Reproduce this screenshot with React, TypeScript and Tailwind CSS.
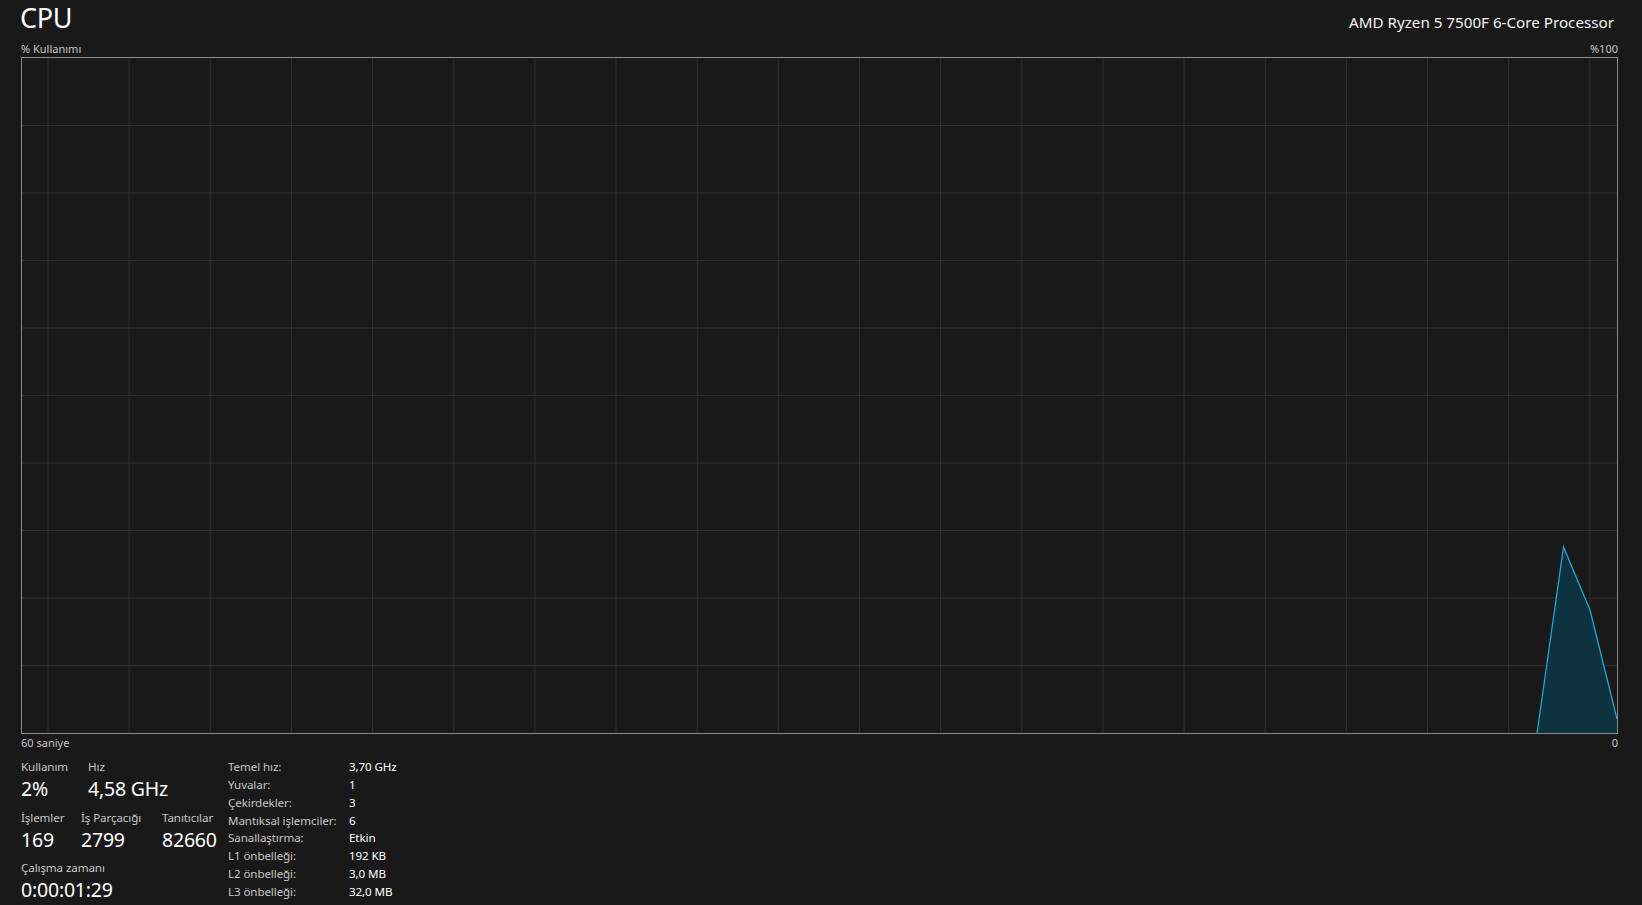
import React from "react";

// grafik iç alanı (kenarlık hariç)
const W = 1596;
const H = 675;

const vLines = Array.from({ length: 20 }, (_, i) => 26 + i * 81.2).filter((x) => x < W);
const hLines = Array.from({ length: 9 }, (_, i) => 67.5 * (i + 1));

const usage = [
  [1516, 675],
  [1542.5, 489],
  [1569, 552],
  [1596, 661],
];

const specs: [string, string][] = [
  ["Temel hız:", "3,70 GHz"],
  ["Yuvalar:", "1"],
  ["Çekirdekler:", "3"],
  ["Mantıksal işlemciler:", "6"],
  ["Sanallaştırma:", "Etkin"],
  ["L1 önbelleği:", "192 KB"],
  ["L2 önbelleği:", "3,0 MB"],
  ["L3 önbelleği:", "32,0 MB"],
];

function Stat({ label, value, className }: { label: string; value: string; className?: string }) {
  return (
    <div className={className}>
      <div className="text-[11.6px] leading-[16px] tracking-[-0.1px] text-[#c6c6c6]">{label}</div>
      <div className="mt-[2px] text-[19.5px] leading-[24px] tracking-[-0.2px] text-white">{value}</div>
    </div>
  );
}

function UsageGraph() {
  const line = usage.map((p) => p.join(",")).join(" ");
  const area = `${line} ${W},${H}`;
  return (
    <div className="h-[677px] w-full border border-[#8b8b8b]">
      <svg width="100%" height="100%" viewBox={`0 0 ${W} ${H}`} preserveAspectRatio="none" className="block">
        {vLines.map((x) => (
          <line key={x} x1={x} x2={x} y1={0} y2={H} stroke="#2e2e2e" strokeWidth={1} />
        ))}
        {hLines.map((y) => (
          <line key={y} x1={0} x2={W} y1={y} y2={y} stroke="#2e2e2e" strokeWidth={1} />
        ))}
        <polygon points={area} fill="#0f333e" />
        <polyline points={line} fill="none" stroke="#21a6d6" strokeWidth={1.3} />
      </svg>
    </div>
  );
}

export default function App() {
  return (
    <div
      className="h-[905px] w-full overflow-hidden bg-[#191919] pl-[21px] pr-[24px] text-white"
      style={{ fontFamily: '"Noto Sans", "Open Sans", sans-serif' }}
    >
      {/* başlık */}
      <div className="flex h-[40px] items-baseline justify-between">
        <div className="text-[27px] leading-[36px] tracking-[-0.3px] -ml-[1px]">CPU</div>
        <div className="text-[15.2px] leading-[36px] text-[#f2f2f2] pr-[4px]">AMD Ryzen 5 7500F 6-Core Processor</div>
      </div>

      <div className="flex h-[17px] justify-between text-[11px] leading-[17px] text-[#c6c6c6]">
        <span>% Kullanımı</span>
        <span>%100</span>
      </div>

      <UsageGraph />

      <div className="flex h-[18px] justify-between text-[11px] leading-[18px] text-[#c6c6c6]">
        <span>60 saniye</span>
        <span>0</span>
      </div>

      {/* alt bilgiler */}
      <div className="flex">
        <div className="mt-[7px] flex w-[207px] flex-col gap-[8.5px]">
          <div className="flex">
            <Stat label="Kullanım" value="2%" className="w-[67px]" />
            <Stat label="Hız" value="4,58 GHz" />
          </div>
          <div className="flex">
            <Stat label="İşlemler" value="169" className="w-[60px]" />
            <Stat label="İş Parçacığı" value="2799" className="w-[81px]" />
            <Stat label="Tanıtıcılar" value="82660" />
          </div>
          <Stat label="Çalışma zamanı" value="0:00:01:29" />
        </div>

        <div className="mt-[6px]">
          {specs.map(([k, v]) => (
            <div key={k} className="flex text-[11.6px] leading-[17.86px] tracking-[-0.1px]">
              <span className="w-[121px] text-[#c6c6c6]">{k}</span>
              <span className="text-white">{v}</span>
            </div>
          ))}
        </div>
      </div>
    </div>
  );
}
